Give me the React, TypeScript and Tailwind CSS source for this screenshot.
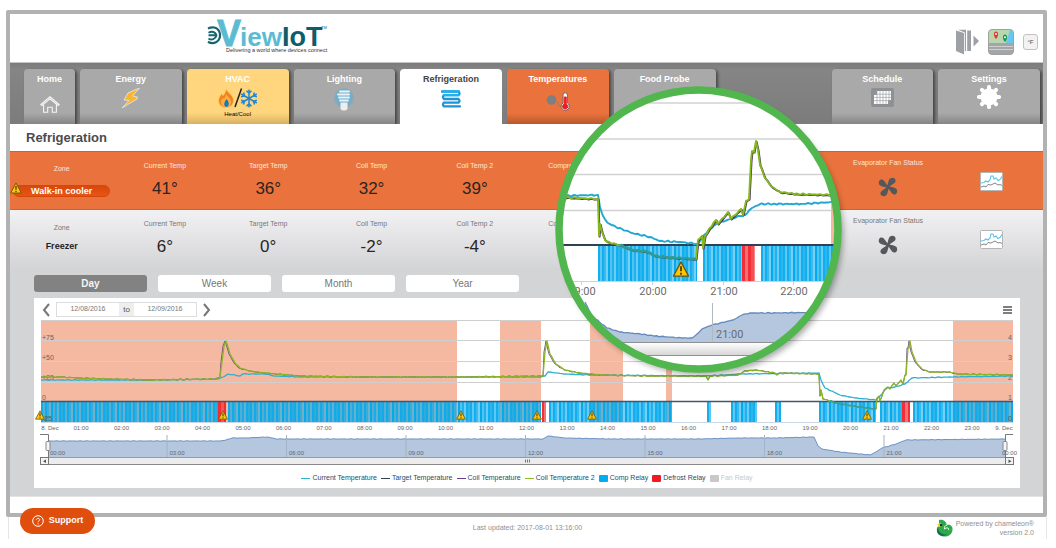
import { useState } from 'react';
import type { ReactNode } from 'react';

type Point = [number, number];

const hours = Array.from({ length: 23 }, (_, i) => `${String(i + 1).padStart(2, '0')}:00`);

const zones = [
  { name: 'Walk-in cooler', alert: true, temps: ['41°', '36°', '32°', '39°'] },
  { name: 'Freezer', alert: false, temps: ['6°', '0°', '-2°', '-4°'] },
];

const tempLabels = ['Current Temp', 'Target Temp', 'Coil Temp', 'Coil Temp 2'];

const legend = [
  { label: 'Current Temperature', mark: 'h-px w-[9px] bg-[#2bb3d6]' },
  { label: 'Target Temperature', mark: 'h-px w-[9px] bg-[#2f4255]' },
  { label: 'Coil Temperature', mark: 'h-px w-[9px] bg-[#6b3f8f]' },
  { label: 'Coil Temperature 2', mark: 'h-px w-[9px] bg-[#8bbc21]' },
  { label: 'Comp Relay', mark: 'h-[7px] w-[9px] rounded-[1px] bg-[#00aeef]' },
  { label: 'Defrost Relay', mark: 'h-[7px] w-[9px] rounded-[1px] bg-[#ed1c24]' },
  { label: 'Fan Relay', mark: 'h-[7px] w-[9px] rounded-[1px] bg-[#c8c8c8]', off: true },
];

const coilLine: Point[] = [
  [41, 377], [60, 377], [80, 378], [110, 379], [150, 380], [215, 379], [220, 377], [222, 362], [224, 346], [226, 341],
  [228, 347], [230, 354], [235, 363], [240, 368], [250, 371], [265, 373], [300, 376], [360, 377], [457, 377], [543, 376],
  [545, 352], [547, 341], [550, 354], [556, 364], [565, 370], [580, 373], [600, 375], [650, 376], [706, 376], [708, 380],
  [710, 376], [738, 375], [745, 371], [757, 370], [775, 373], [777, 375], [781, 373], [819, 374], [820, 396], [821, 390],
  [823, 399], [830, 401], [840, 404], [860, 407], [876, 409], [877, 398], [879, 396], [880, 401], [884, 390], [888, 387],
  [890, 389], [894, 383], [896, 386], [901, 380], [903, 384], [905, 375], [906, 375], [908, 348], [909, 348], [910, 341],
  [912, 352], [916, 362], [922, 369], [930, 372], [950, 372], [957, 374], [1013, 375],
];

const currentLine: Point[] = [
  [41, 380], [150, 380], [218, 379], [223, 377], [228, 374], [240, 376], [243, 374], [265, 374], [275, 376], [300, 377],
  [540, 377], [545, 376], [548, 372], [565, 374], [590, 375], [706, 376], [739, 374], [819, 373], [821, 380], [825, 388],
  [840, 395], [855, 398], [876, 400], [880, 396], [887, 388], [895, 387], [905, 384], [912, 378], [950, 377], [1013, 376],
];

const navLine: Point[] = [
  [48, 441], [220, 441], [226, 440], [232, 438], [245, 438], [268, 437], [276, 439], [430, 439], [543, 439], [548, 436],
  [565, 438], [610, 439], [680, 439], [700, 439], [738, 438], [775, 438], [814, 437], [818, 446], [822, 449], [840, 452],
  [870, 455], [876, 452], [882, 448], [896, 444], [906, 440], [1005, 439],
];

const zoomCoil: Point[] = [
  [556, 197], [598, 199], [599, 236], [600, 224], [602, 232], [605, 240], [610, 243], [620, 245], [632, 250], [648, 252],
  [655, 256], [675, 258], [696, 259], [698, 240], [702, 236], [703, 248], [705, 236], [710, 228], [716, 220], [718, 224],
  [728, 212], [731, 219], [741, 209], [743, 215], [746, 201], [749, 199], [751, 160], [752, 151], [754, 152], [756, 141],
  [758, 150], [760, 165], [765, 178], [772, 187], [780, 192], [795, 194], [834, 195],
];

const zoomCurrent: Point[] = [
  [556, 196], [598, 195], [600, 207], [603, 216], [608, 223], [616, 227], [622, 229], [632, 233], [650, 237], [660, 241],
  [680, 242], [698, 244], [703, 236], [710, 229], [718, 223], [740, 216], [745, 215], [752, 208], [760, 204], [775, 204],
  [800, 204], [834, 202],
];

const zoomNav: Point[] = [
  [585, 302], [592, 316], [607, 328], [620, 332], [640, 334], [655, 336], [682, 338], [692, 338], [697, 334], [702, 329],
  [712, 325], [733, 320], [742, 315], [750, 313], [770, 313], [840, 312],
];

// Samples a polyline every few pixels and adds sensor noise
function trace(points: Point[], noise: number) {
  const out: string[] = [];
  points.forEach(([x, y], i) => {
    out.push(`${x},${y}`);
    const next = points[i + 1];
    if (!next) return;
    for (let px = x + 2; px < next[0]; px += 2) {
      const t = (px - x) / (next[0] - x);
      const wobble = Math.sin(px * 1.7) * Math.cos(px * 0.63) * noise;
      out.push(`${px},${(y + (next[1] - y) * t + wobble).toFixed(2)}`);
    }
  });
  return out.join(' ');
}

// Part of a line that runs over the relay bars
function between(points: Point[], min: number, max: number) {
  return points.filter(([x]) => x >= min && x <= max);
}

const shades = [0.95, 0.65, 0.95, 0.8, 0.55, 1, 0.7, 0.9, 0.6, 0.95, 0.85];

interface RelayProps {
  from: number;
  to: number;
  top: number;
  height: number;
  color?: string;
  step?: number;
}

function Relay({ from, to, top, height, color = '#05aaec', step = 2 }: RelayProps) {
  const bars: ReactNode[] = [];
  for (let x = from, i = 0; x < to; x += step, i++) {
    bars.push(
      <rect key={x} x={x} y={top} width={Math.min(step, to - x)} height={height} fill={color} opacity={shades[i % shades.length]} />
    );
  }
  return <g shapeRendering="crispEdges">{bars}</g>;
}

function Alert({ x, y, size = 10 }: { x: number; y: number; size?: number }) {
  return (
    <svg x={x - size / 2} y={y - size / 2} width={size} height={size} viewBox="0 0 18 18">
      <path d="M9 1.5 17 16.5H1Z" fill="#fdc60b" stroke="#6b5712" strokeWidth="1.4" strokeLinejoin="round" />
      <path d="M9 6v5.500M9 13v2" stroke="#3a2c00" strokeWidth="1.700" />
    </svg>
  );
}

function Logo() {
  return (
    <svg className="h-12 w-[124px]" viewBox="205 10 124 48" role="img" aria-label="eViewIoT" fontFamily="'Liberation Sans', Arial, sans-serif">
      <g fill="none" stroke="#17646f" strokeWidth="2.200">
        <path d="M208 28.500c4-2 9-1.500 11.200 2.800 2 4 .8 9-3.200 11-2.500 1.200-5.500 1-8-.6" />
        <path d="M208.500 35.200h8M208.500 38.500c3 2 7 1 8-3.300-1-3.200-4.500-4.500-8-2.500" strokeWidth="1.900" />
      </g>
      <text x="217" y="46" fontSize="36" fontWeight="bold" fill="#5bbbd3" stroke="#5bbbd3" strokeWidth=".8">V</text>
      <text x="240" y="46" fontSize="26" fontWeight="bold" fill="#5bbbd3">iew</text>
      <text x="282" y="46" fontSize="27" fontWeight="bold" fill="#0f5c6b">IoT</text>
      <text x="321" y="29" fontSize="4" fill="#0f5c6b">TM</text>
      <text x="226" y="52" fontSize="5.500" fill="#333">Delivering a world where devices connect</text>
    </svg>
  );
}

function HomeIcon() {
  return (
    <svg className="mt-2.5 h-[19px] w-[22px]" viewBox="0 0 24 20" fill="none" stroke="#f4f4f4" strokeWidth="1.200">
      <path d="M2 10 12 1.500 22 10l-1.200 1L12 3.800 3.200 11Z" />
      <path d="M5 10v8.500h4.500V13h5v5.500H19V10" />
    </svg>
  );
}

function BoltIcon() {
  return (
    <svg className="mt-[3px] h-5 w-5" viewBox="0 0 20 20">
      <path d="M18.500 0 7 5 3 12l5 .5L1 20 16 11l.5-2-5-1Z" fill="#fbb62f" stroke="#e4e4e4" strokeWidth=".9" />
    </svg>
  );
}

function HeatCoolIcon() {
  return (
    <svg className="mt-[3px] h-5 w-10" viewBox="0 0 40 20">
      <path d="M8 .5c1 4 7.500 6 7.500 12 0 4.500-3.500 7-7.500 7s-7.500-2.500-7.500-7c0-3 2-4.500 3-7l1.500 2C6.500 6 7.500 4 8 .5Z" fill="#f58220" stroke="#ffd05a" strokeWidth=".8" />
      <path d="M8 6c1 3 5 4 5 8 0 3-2.500 5-5 5s-5-2-5-5c0-2 1-3 2-4l1 1c1-1.500 2-3 2-5Z" fill="#fcb040" />
      <path d="M8.500 11c3 3 3 7 0 8-3-.5-3-4 0-8Z" fill="#1679b8" />
      <path d="M23.500.5 17 19" stroke="#222" strokeWidth="1.500" />
      <g stroke="#2087d2" strokeWidth="1.500" fill="none">
        {[0, 60, 120, 180, 240, 300].map((a) => (
          <path key={a} transform={`rotate(${a} 31 10.500)`} d="M31 10.500V1.500M28.500 2.800 31 5.300l2.500-2.500" />
        ))}
      </g>
    </svg>
  );
}

function BulbIcon() {
  return (
    <svg className="mt-[3px] h-6 w-[22px]" viewBox="0 0 22 24">
      <ellipse cx="11" cy="10" rx="10" ry="10" fill="#5aa9cf" opacity=".4" />
      <ellipse cx="11" cy="10" rx="8" ry="8" fill="#5db4dc" opacity=".6" />
      <path d="M7 3.500h9M5 6.500h11M6 9.500h10M7 12.500h8" stroke="#e6f4fa" strokeWidth="1.800" strokeLinecap="round" />
      <path d="M7.500 14.500h7V21l-2 1.500h-3l-2-1.500Z" fill="#eee" />
    </svg>
  );
}

function CoilIcon() {
  return (
    <svg className="mt-[5px] h-[18px] w-5" viewBox="0 0 20 18" fill="none" stroke="#1d93d8" strokeWidth="2.300" strokeLinecap="round">
      <path d="M1 1.500h16.500q2 1.800 0 3.700H3q-2 1.900 0 3.800h14.500q2 1.800 0 3.700H3q-2 1.800 0 3.700h16" />
      <path d="M1 1.500h17M3 5.200h14" stroke="#20b2ea" />
    </svg>
  );
}

function ProbeIcon() {
  return (
    <svg className="mt-[7px] h-[19px] w-6" viewBox="0 0 24 19">
      <circle cx="5.500" cy="8" r="4.800" fill="#7d7f82" />
      <path d="M10 9c3-1 1 5 5 6" stroke="#8a7f7a" fill="none" />
      <path d="M17 3a2.200 2.200 0 0 1 4.400 0v8a4 4 0 1 1-4.400 0Z" fill="#fff" stroke="#70666a" />
      <path d="M18.200 5h2v7a2.600 2.600 0 1 1-2 0Z" fill="#ed1c24" stroke="#ed1c24" />
    </svg>
  );
}

function ScheduleIcon() {
  return (
    <svg className="mt-[3px] h-[19px] w-[23px]" viewBox="0 0 23 19">
      <rect width="23" height="19" rx="2" fill="#8e9094" />
      <path d="M6 3h14v9h-3v4H3V7h3Z" fill="#fff" />
      <path d="M3 6.200h17M3 9.400h17M3 12.600h17M6 3v13M9 3v13M12 3v13M15 3v13M18 3v13" stroke="#9fa1a5" strokeWidth=".7" />
    </svg>
  );
}

function GearIcon() {
  return (
    <svg className="h-6 w-6" viewBox="0 0 24 24" fill="#fff">
      <circle cx="12" cy="12" r="8.500" />
      {[0, 45, 90, 135, 180, 225, 270, 315].map((a) => (
        <rect key={a} x="10" y="0" width="4" height="7" rx="1.800" transform={`rotate(${a} 12 12)`} />
      ))}
    </svg>
  );
}

function FanIcon() {
  return (
    <svg className="h-5 w-5" viewBox="0 0 20 20" fill="#55585b">
      {[0, 90, 180, 270].map((a) => (
        <path key={a} transform={`rotate(${a} 10 10)`} d="M10 11C7 10 3 9.800 1.500 8 .2 6 .8 3 3 2.500 5 2 6 3.500 7 5 8 6.500 9 8 10.800 9.300Z" />
      ))}
    </svg>
  );
}

function TrendIcon() {
  return (
    <svg className="h-[19px] w-[23px]" viewBox="0 0 23 19" fill="none">
      <rect x=".5" y=".5" width="22" height="18" rx="1" fill="#fff" stroke="#b5b5b5" />
      <path d="m1 11 3-.5 2-1.500 2 1 2-2 1-4h2l1 3 2-1 2 2.500 2-1 2-3" stroke="#5fc0ea" strokeWidth="1.100" />
      <path d="m1 15 3-1 2 1 2-2.500 3 .5 4-2 3 2 2-.5 2 1" stroke="#777" strokeWidth=".9" />
    </svg>
  );
}

const tabClass =
  'flex min-w-0 flex-col items-center rounded-t-[4px] pt-1 text-[9px] font-bold leading-3 text-white shadow-[2px_1px_3px_rgba(0,0,0,0.45)]';
const greyTab = 'bg-linear-to-b from-[#a9a9a9] from-80% to-[#858585]';

function NavBar() {
  return (
    <nav className="grid h-[61px] grid-cols-[51px_repeat(6,minmax(0,1fr))_106px_repeat(2,minmax(0,1fr))] gap-x-[5px] overflow-hidden bg-linear-to-b from-[#7b7b7b] from-0% via-[#858585] via-10% to-[#7c7c7c] pl-[14px] pr-[3px] pt-1.5">
      <a href="#home" className={`${tabClass} ${greyTab}`}>Home<HomeIcon /></a>
      <a href="#energy" className={`${tabClass} ${greyTab}`}>Energy<BoltIcon /></a>
      <a href="#hvac" className={`${tabClass} bg-linear-to-b from-[#ffd67d] from-80% to-[#d9b061]`}>
        HVAC
        <HeatCoolIcon />
        <span className="text-[6px] leading-3 font-normal text-black">Heat/Cool</span>
      </a>
      <a href="#lighting" className={`${tabClass} ${greyTab}`}>Lighting<BulbIcon /></a>
      <a href="#refrigeration" aria-current="page" className="flex min-w-0 flex-col items-center rounded-t-[4px] bg-white pt-1 text-[9px] leading-3 font-bold text-[#444]">
        Refrigeration
        <CoilIcon />
      </a>
      <a href="#temperatures" className={`${tabClass} bg-linear-to-b from-[#ea733d] from-80% to-[#b9582c]`}>Temperatures<ProbeIcon /></a>
      <a href="#food-probe" className={`${tabClass} ${greyTab}`}>Food Probe</a>
      <span />
      <a href="#schedule" className={`${tabClass} ${greyTab}`}>Schedule<ScheduleIcon /></a>
      <a href="#settings" className={`${tabClass} ${greyTab}`}>Settings<GearIcon /></a>
    </nav>
  );
}

function ZoneRow({ zone }: { zone: (typeof zones)[number] }) {
  const label = zone.alert ? 'text-[#fde6da]' : 'text-[#777]';
  return (
    <div
      className={`grid grid-cols-10 text-center text-[7px] leading-[8px] ${
        zone.alert ? 'h-[59px] border-y border-[#d4602c] bg-[#ea733d] pt-2.5' : 'h-[60px] bg-linear-to-b from-[#f2f2f4] to-[#d3d4d6] pt-2.5'
      }`}
    >
      <div className="relative">
        <div className={`${zone.alert ? 'mt-[3px]' : 'mt-1'} ${label}`}>Zone</div>
        {zone.alert ? (
          <>
            <button className="mx-auto mt-3 block h-3 w-[97px] rounded-full border border-[#d4470c] bg-linear-to-b from-[#d9480c] to-[#e85412] text-[9px] leading-[10px] font-bold text-white">
              {zone.name}
            </button>
            <svg className="absolute top-5 left-0 h-3 w-3" viewBox="0 0 10 10"><Alert x={5} y={5} /></svg>
          </>
        ) : (
          <div className="mt-2 text-[9px] leading-3 font-bold text-[#222]">{zone.name}</div>
        )}
      </div>
      {zone.temps.map((temp, i) => (
        <div key={tempLabels[i]}>
          <div className={label}>{tempLabels[i]}</div>
          <div className="mt-[9px] text-[17px] leading-5 text-[#2b2421]">{temp}</div>
        </div>
      ))}
      <div className={label}>Compressor Status</div>
      <div />
      <div />
      <div className="-mt-[3px] flex flex-col items-center">
        <div className={label}>Evaporator Fan Status</div>
        <div className="mt-2.5"><FanIcon /></div>
      </div>
      <div className="flex justify-center pt-2.5">
        <button aria-label={`${zone.name} trend`} className="h-[19px]"><TrendIcon /></button>
      </div>
    </div>
  );
}

function TemperatureChart() {
  const coil = trace(coilLine, 0.5);
  const shifted = trace(coilLine.map(([x, y]): Point => [x + (y < 374 ? -1 : 0), y]), 0.6);
  return (
    <svg className="block w-full" viewBox="34 318 986 150" fontFamily="'Liberation Sans', Arial, sans-serif" role="img" aria-label="Temperature history">
      {[[41, 416], [500, 41], [590, 33], [666, 6], [953, 60]].map(([x, w]) => (
        <rect key={x} x={x} y="320" width={w} height="102" fill="#f5b8a0" />
      ))}
      <path d="M41 320.500H1013M41 340.500H1013M41 361.500H1013M41 382.500H1013" stroke="#cfcfcf" />
      <g fontSize="7" fill="#666">
        {['+75', '+50', '+25', '0'].map((t, i) => (
          <text key={t} x="42" y={340 + i * 20}>{t}</text>
        ))}
        {['4', '3', '2', '1'].map((t, i) => (
          <text key={t} x="1008" y={340 + i * 20}>{t}</text>
        ))}
      </g>

      <Relay from={41} to={218} top={402} height={20} />
      <Relay from={218} to={226} top={402} height={20} color="#f0242c" step={3} />
      <Relay from={228} to={541} top={402} height={20} />
      <Relay from={542} to={546} top={402} height={20} color="#f0242c" />
      <rect x="547" y="402" width="2" height="20" fill="#fff" />
      <Relay from={549} to={672} top={402} height={20} />
      <Relay from={707} to={711} top={402} height={20} />
      <Relay from={731} to={757} top={402} height={20} />
      <Relay from={775} to={781} top={402} height={20} />
      <Relay from={819} to={876} top={402} height={20} />
      <Relay from={880} to={902} top={402} height={20} />
      <Relay from={902} to={910} top={402} height={20} color="#f0242c" step={3} />
      <Relay from={913} to={1013} top={402} height={20} />
      <text x="42" y="421" fontSize="7" fill="#555">-25</text>
      <text x="1008" y="421" fontSize="7" fill="#555">0</text>
      <path d="M41 401.500H1013" stroke="#44566a" strokeWidth="1.500" />
      <path d="M41 422.500H1013" stroke="#c9d8e6" />

      <g fill="none" strokeLinejoin="round">
        <polyline points={trace(currentLine, 0.4)} stroke="#2fb0d2" strokeWidth="1.300" />
        <polyline points={shifted} stroke="#6a4a7a" strokeWidth=".9" />
        <polyline points={coil} stroke="#8bb524" strokeWidth="1.300" />
        <polyline points={trace(between(coilLine, 830, 876), 0.5)} stroke="#2b9fae" strokeWidth="1.500" />
      </g>
      {[40, 223, 461, 537, 592, 867].map((x) => (
        <Alert key={x} x={x} y={415} />
      ))}

      <g fontSize="6" fill="#666" textAnchor="middle">
        <text x="50" y="430">8. Dec</text>
        {hours.map((h, i) => (
          <text key={h} x={81 + i * 40.5} y="430">{h}</text>
        ))}
        <text x="1004" y="430">9. Dec</text>
      </g>

      {/* Range navigator */}
      <polygon points={`${trace(navLine, 0.3)} 1005,457 48,457`} fill="#b4c7df" />
      <polyline points={trace(navLine, 0.3)} fill="none" stroke="#6d92c4" />
      {['00:00', '03:00', '06:00', '09:00', '12:00', '15:00', '18:00', '21:00', '00:00'].map((t, i) => (
        <g key={i}>
          {i > 0 && i < 8 && <path d={`M${47.5 + i * 119.5} 435v22`} stroke="#a4b3c6" />}
          <text x={50 + i * 119.5 - (i === 8 ? 4 : 0)} y="455" fontSize="6" fill="#666">{t}</text>
        </g>
      ))}
      <path d="M40 434.500h8.500V457M1013 434.500h-7.500V457" fill="none" stroke="#777" />
      <g fill="#f4f4f4" stroke="#888">
        <rect x="46" y="441.500" width="4" height="9" rx="1" />
        <rect x="1003" y="441.500" width="4" height="9" rx="1" />
      </g>
      <rect x="41" y="457.500" width="972" height="7" fill="#ececec" stroke="#999" />
      <path d="M41 464.500h972" stroke="#888" />
      <g fill="#f3f3f3" stroke="#777">
        <rect x="40.500" y="457.500" width="8" height="7" />
        <rect x="1005.500" y="457.500" width="8" height="7" />
      </g>
      <path d="m46 459.500-3 1.700 3 1.700ZM1008.500 459.500l3 1.700-3 1.700Z" fill="#555" />
      <path d="M525.500 459.500v3M527.500 459.500v3M529.500 459.500v3" stroke="#777" />
    </svg>
  );
}

function Magnifier() {
  return (
    <svg
      className="pointer-events-none absolute top-[80px] left-[548px] h-[304px] w-[304px]"
      viewBox="548 80 304 304"
      fontFamily="Roboto, 'Liberation Sans', sans-serif"
      role="img"
      aria-label="Magnified chart"
    >
      <defs>
        <clipPath id="lens"><circle cx="698.500" cy="229.500" r="138" /></clipPath>
        <linearGradient id="bar" x2="0" y2="1">
          <stop offset="0" stopColor="#fff" />
          <stop offset="1" stopColor="#d5d5d5" />
        </linearGradient>
        <filter id="shade" x="-10%" y="-10%" width="125%" height="125%"><feGaussianBlur stdDeviation="3" /></filter>
      </defs>
      <circle cx="702" cy="234" r="141" fill="#000" opacity=".35" filter="url(#shade)" />
      <circle cx="698.500" cy="229.500" r="140" fill="#fff" />
      <g clipPath="url(#lens)">
        <path d="M555 103H842M555 139H842M555 174.500H842M555 210.500H842" stroke="#d2d2d2" strokeWidth="1.600" />
        <rect x="831" y="203" width="10" height="78" fill="#f5b8a0" />
        <Relay from={598} to={697} top={246} height={35} />
        <Relay from={703} to={742} top={246} height={35} />
        <Relay from={742} to={755} top={246} height={35} step={3} color="#f0242c" />
        <Relay from={761} to={840} top={246} height={35} />
        <path d="M555 245H842" stroke="#2f4255" strokeWidth="2" />
        <g fill="none" strokeLinejoin="round" strokeWidth="1.900">
          <polyline points={trace(zoomCurrent, 0.8)} stroke="#22a7d0" />
          <polyline points={trace(zoomCoil.map(([x, y]): Point => [x + 0.6, y + 0.6]), 0.4)} stroke="#4c2f66" />
          <polyline points={trace(zoomCoil, 0.8)} stroke="#84b81c" />
          <polyline points={trace(between(zoomCoil, 620, 696), 0.8)} stroke="#2b9c9a" strokeWidth="2.600" />
        </g>
        <Alert x={681} y={269} size={17} />
        <path d="M555 281.500H842M581.500 281v4M652.500 281v4M723.500 281v4M793.500 281v4" stroke="#c3d3e3" />
        <g fontSize="11" fill="#6b6b6b" textAnchor="middle">
          <text x="582" y="295">19:00</text>
          <text x="653" y="295">20:00</text>
          <text x="724" y="295">21:00</text>
          <text x="794" y="295">22:00</text>
        </g>
        <polygon points={`${trace(zoomNav, 0.5)} 840,342 585,342`} fill="#b4c7df" />
        <polyline points={trace(zoomNav, 0.5)} fill="none" stroke="#6389bd" strokeWidth="1.300" />
        <path d="M712.500 303v39" stroke="#b0b8c2" />
        <text x="716" y="338" fontSize="11" fill="#6b6b6b">21:00</text>
        <rect x="580" y="342.500" width="240" height="13" fill="url(#bar)" stroke="#909090" />
      </g>
      <circle cx="698.500" cy="229.500" r="139.500" fill="none" stroke="#50b64d" strokeWidth="7.500" />
    </svg>
  );
}

export default function App() {
  const [range, setRange] = useState('Day');
  const [from, setFrom] = useState('12/08/2016');
  const [to, setTo] = useState('12/09/2016');

  return (
    <div className="relative bg-white pt-2.5 font-['Liberation_Sans',Arial,sans-serif]">
      <div className="ml-1.5 mr-[9px] rounded-[2px] border-4 border-[#b2b2b2] bg-white">
        {/* Header */}
        <header className="flex h-[49px] items-center border-b border-[#c4c4c4] pr-[5px]">
          <div className="ml-[195px] -mt-2"><Logo /></div>
          <div className="mt-2 ml-auto flex items-center gap-[9px]">
            <button aria-label="Log out">
              <svg className="h-[26px] w-[23px]" viewBox="0 0 23 26" fill="#9da1a5">
                <path d="M0 1.500 8 4v21.500L0 22ZM2 .8h8v21l-1.200.8V3.500ZM11.200 1.500H15V22h-3.800ZM17.500 6.500 23 12l-5.500 5.500Z" />
              </svg>
            </button>
            <button aria-label="Map">
              <svg className="h-[26px] w-[26px]" viewBox="0 0 26 26">
                <rect x=".5" y=".5" width="25" height="25" rx="3.500" fill="#a3a6a9" stroke="#a0a0a0" />
                <path d="M1 14V4q0-3 3-3h18q3 0 3 3v10Z" fill="#b9d7ac" />
                <path d="M22 1q3 0 3 3v10h-7Z" fill="#69c6ee" />
                <path d="M1 17.500h24M1 20.500h24" stroke="#cdcfd1" />
                <path d="M8 10C5 6.500 5.500 2.500 8 2.500S11 6.500 8 10Z" fill="#e5322d" />
                <path d="M17 13c-3-3.500-2.500-7.500 0-7.500s3 4 0 7.500Z" fill="#149552" />
                <circle cx="8" cy="5" r="1" fill="#fff" />
                <circle cx="17" cy="8.300" r="1" fill="#fff" />
              </svg>
            </button>
            <button className="h-4 w-[15px] rounded-[3px] border border-[#c2c2c2] bg-[#f2f2f2] text-[6px] leading-3 font-bold text-[#777]">°F</button>
          </div>
        </header>

        <NavBar />

        <h1 className="h-[27px] pl-4 text-[13px] leading-[27px] font-bold text-[#4b4b4b]">Refrigeration</h1>
        {zones.map((zone) => (
          <ZoneRow key={zone.name} zone={zone} />
        ))}

        <main className="mb-4 border-b border-[#e3e3e3] bg-[#d3d4d6] pt-[5px] pr-[23px] pb-2 pl-6">
          <div className="flex gap-[11px]">
            {['Day', 'Week', 'Month', 'Year'].map((name) => (
              <button
                key={name}
                onClick={() => setRange(name)}
                className={`h-[17px] w-[113px] rounded-[3px] text-[10px] leading-[17px] ${
                  range === name ? 'bg-[#828282] font-bold text-[#f4f4f4]' : 'bg-white text-[#777]'
                }`}
              >
                {name}
              </button>
            ))}
          </div>

          {/* Chart panel */}
          <section className="mt-1.5 bg-white pt-[3px]">
            <div className="flex h-[17px] items-center pr-2 pl-2">
              <button aria-label="Previous day">
                <svg className="h-[14px] w-2" viewBox="0 0 8 14" fill="none" stroke="#777" strokeWidth="2"><path d="M7 1 2 7l5 6" /></svg>
              </button>
              <div className="mx-1.5 flex h-[15px] border border-[#ddd] text-[7px] text-[#777]">
                <input aria-label="From date" value={from} onChange={(e) => setFrom(e.target.value)} className="w-[62px] text-center" />
                <label htmlFor="to-date" className="w-[15px] bg-[#eee] text-center text-[8px] leading-[13px] text-[#555]">to</label>
                <input id="to-date" value={to} onChange={(e) => setTo(e.target.value)} className="w-[62px] text-center" />
              </div>
              <button aria-label="Next day">
                <svg className="h-[14px] w-2" viewBox="0 0 8 14" fill="none" stroke="#777" strokeWidth="2"><path d="m1 1 5 6-5 6" /></svg>
              </button>
              <button aria-label="Chart menu" className="ml-auto">
                <svg className="h-2 w-[9px]" viewBox="0 0 9 8" stroke="#555" strokeWidth="1.500"><path d="M0 1h9M0 4h9M0 7h9" /></svg>
              </button>
            </div>
            <TemperatureChart />
            <ul className="flex h-5 items-center justify-center gap-1 text-[7px] leading-[8px] text-[#274b6d]">
              {legend.map((item) => (
                <li key={item.label} className={`flex items-center gap-0.5 ${item.off ? 'text-[#c8c8c8]' : ''}`}>
                  <span className={item.mark} />
                  {item.label}
                </li>
              ))}
            </ul>
          </section>
        </main>
      </div>

      <footer className="ml-2 mr-[9px] grid h-[22px] grid-cols-[1fr_auto_1fr] border-x border-[#e6e6e6] px-3 text-[7px] leading-[9px] text-[#8f8f8f]">
        <p className="col-start-2 pt-1.5">Last updated: 2017-08-01 13:16:00</p>
        <div className="flex justify-end gap-[3px] pt-0.5">
          <svg className="h-[18px] w-[17px]" viewBox="0 0 17 18">
            <path d="M3 1c5-1 7 2 8 5 3-1 6 1 5.500 5-.5 5-5 7-9 6.500C3 17 0 13 1 9c1-2 3-2 2-4Z" fill="#2eaa4a" />
            <path d="M2 8c0 5 4 8 9 7.500-4 3-10 1-10-4Z" fill="#176b56" />
            <path d="M11 6c-2 .5-3 2-2.500 4M8.500 10c2-2 5-1 4 1" fill="none" stroke="#fff" />
            <path d="m1 5 4-1 1 3-3 1Z" fill="#ffd624" />
            <circle cx="5" cy="6" r="1.300" fill="#1b3350" />
          </svg>
          <p className="text-right">Powered by chameleon®<br />version 2.0</p>
        </div>
      </footer>

      <button className="absolute top-[508px] left-5 flex h-[26px] w-[75px] items-center justify-center gap-[5px] rounded-full bg-[#e04e0d] text-[9px] font-bold text-white">
        <svg className="h-3 w-3" viewBox="0 0 12 12" fill="none" stroke="#fff">
          <circle cx="6" cy="6" r="5.300" />
          <path d="M4.500 4.800c0-2 3.200-1.900 3.200 0C7.700 6 6 5.900 6 7.200M6 8.300v1" />
        </svg>
        Support
      </button>

      <Magnifier />
    </div>
  );
}
